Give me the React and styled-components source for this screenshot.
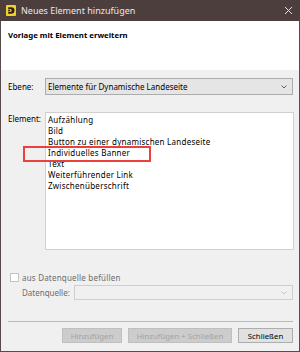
import React from 'react'
import styled, { createGlobalStyle } from 'styled-components'

const GlobalStyle = createGlobalStyle`
  html, body {
    margin: 0;
    padding: 0;
    background: #f0f0f0;
  }
  body {
    font-family: "Noto Sans", "Liberation Sans", sans-serif;
  }
`

const Window = styled.div`
  width: 300px;
  height: 352px;
  box-sizing: border-box;
  display: flex;
  flex-direction: column;
  border: 1px solid #574a48;
  border-top: none;
  background: #f0f0f0;
  font-size: 8px;
  color: #000;
`

const TitleBar = styled.div`
  height: 21px;
  margin: 0 -1px;
  background: #4b3e3c;
  display: flex;
  align-items: center;
  padding: 0 7px 0 6px;
`

const Title = styled.span`
  flex: 1;
  margin-left: 5px;
  color: #ebe7e6;
  font-size: 9px;
`

const CloseButton = styled.div`
  width: 9px;
  height: 9px;
  display: flex;
  margin-top: -1px;
`

const Header = styled.div`
  height: 49px;
  background: #fff;
  padding: 9px 7px 0;
  box-sizing: border-box;
`

const HeaderTitle = styled.div`
  font-weight: bold;
  font-size: 7.8px;
`

const Body = styled.div`
  flex: 1;
  display: flex;
  flex-direction: column;
  padding: 8px 6px 0 7px;
`

const FieldRow = styled.div`
  display: flex;
  align-items: center;
`

const Label = styled.span`
  width: 37px;
  flex-shrink: 0;
  color: ${p => (p.disabled ? '#6d6d6d' : '#000')};
`

const Combo = styled.div`
  flex: 1;
  height: ${p => (p.disabled ? 15 : 17)}px;
  box-sizing: border-box;
  border: 1px solid ${p => (p.disabled ? '#cfcfcf' : '#acacac')};
  background: ${p => (p.disabled ? '#f0f0f0' : '#e5e5e5')};
  display: flex;
  align-items: center;
  padding: 0 5px 0 2px;
`

const ComboText = styled.span`
  flex: 1;
`

const ListRow = styled.div`
  position: relative;
  display: flex;
  margin-top: 17px;
`

const ElementLabel = styled(Label)`
  padding-top: 1px;
`

const ListBox = styled.div`
  flex: 1;
  height: 138px;
  box-sizing: border-box;
  border: 1px solid #d0d0d0;
  background: #fff;
  padding: 1px 0 0 2px;
  margin-right: -1px;
`

const ListItem = styled.div`
  height: 11px;
  line-height: 11px;
  white-space: nowrap;
  letter-spacing: 0.25px;
`

const Highlight = styled.div`
  position: absolute;
  left: 15px;
  top: 34px;
  width: 128px;
  height: 16px;
  box-sizing: border-box;
  border: 2px solid #ee3f3f;
  pointer-events: none;
`

const CheckRow = styled.div`
  display: flex;
  align-items: center;
  margin-top: 22px;
  margin-left: 2px;
  height: 10px;
  color: #6d6d6d;
  letter-spacing: 0.2px;
`

const CheckBox = styled.div`
  width: 9px;
  height: 9px;
  box-sizing: border-box;
  border: 1px solid #c4c4c4;
  background: #fff;
  margin-right: 3px;
`

const SourceRow = styled(FieldRow)`
  margin-top: 3px;
  padding-left: 14px;
`

const SourceLabel = styled(Label)`
  width: 52px;
`

const Separator = styled.div`
  margin-top: 21px;
  height: 1px;
  background: #b9b9b9;
`

const ButtonBar = styled.div`
  display: flex;
  justify-content: flex-end;
  gap: 6px;
  margin-top: 6px;
`

const Button = styled.button`
  width: ${p => p.w}px;
  height: 15px;
  box-sizing: border-box;
  padding: 0;
  font: inherit;
  font-size: 7.8px;
  border: 1px solid ${p => (p.disabled ? '#bfbfbf' : '#adadad')};
  background: ${p => (p.disabled ? '#cccccc' : '#e1e1e1')};
  color: ${p => (p.disabled ? '#a3a3a3' : '#000')};
`

const Chevron = ({ color }) => (
  <svg width="6" height="4" viewBox="0 0 6 4">
    <path d="M0.5 0.5 L3 3 L5.5 0.5" fill="none" stroke={color} strokeWidth="1" />
  </svg>
)

const AppIcon = () => (
  <svg width="10" height="11" viewBox="0 0 10 11">
    <rect x="0" y="0" width="10" height="11" rx="1" fill="#f2d22a" />
    <path d="M2.2 2.2 H5.2 A3.3 3.3 0 0 1 5.2 8.8 H2.2 V7 H4.6 A1.6 1.6 0 0 0 4.6 4 H2.2 Z" fill="#2b2520" />
    <path d="M2.2 4.6 H4.2 V6.4 H2.2 Z" fill="#2b2520" />
  </svg>
)

const items = [
  'Aufzählung',
  'Bild',
  'Button zu einer dynamischen Landeseite',
  'Individuelles Banner',
  'Text',
  'Weiterführender Link',
  'Zwischenüberschrift',
]

export default function App() {
  return (
    <>
      <GlobalStyle />
      <Window>
        <TitleBar>
          <AppIcon />
          <Title>Neues Element hinzufügen</Title>
          <CloseButton>
            <svg width="9" height="9" viewBox="0 0 9 9">
              <path d="M1 1 L8 8 M8 1 L1 8" stroke="#e6e2e1" strokeWidth="1" />
            </svg>
          </CloseButton>
        </TitleBar>
        <Header>
          <HeaderTitle>Vorlage mit Element erweitern</HeaderTitle>
        </Header>
        <Body>
          <FieldRow>
            <Label>Ebene:</Label>
            <Combo>
              <ComboText>Elemente für Dynamische Landeseite</ComboText>
              <Chevron color="#606060" />
            </Combo>
          </FieldRow>
          <ListRow>
            <ElementLabel>Element:</ElementLabel>
            <ListBox>
              {items.map(item => (
                <ListItem key={item}>{item}</ListItem>
              ))}
            </ListBox>
            <Highlight />
          </ListRow>
          <CheckRow>
            <CheckBox />
            aus Datenquelle befüllen
          </CheckRow>
          <SourceRow>
            <SourceLabel disabled>Datenquelle:</SourceLabel>
            <Combo disabled>
              <ComboText />
              <Chevron color="#c4c4c4" />
            </Combo>
          </SourceRow>
          <Separator />
          <ButtonBar>
            <Button w={60} disabled>Hinzufügen</Button>
            <Button w={104} disabled>Hinzufügen + Schließen</Button>
            <Button w={55}>Schließen</Button>
          </ButtonBar>
        </Body>
      </Window>
    </>
  )
}
